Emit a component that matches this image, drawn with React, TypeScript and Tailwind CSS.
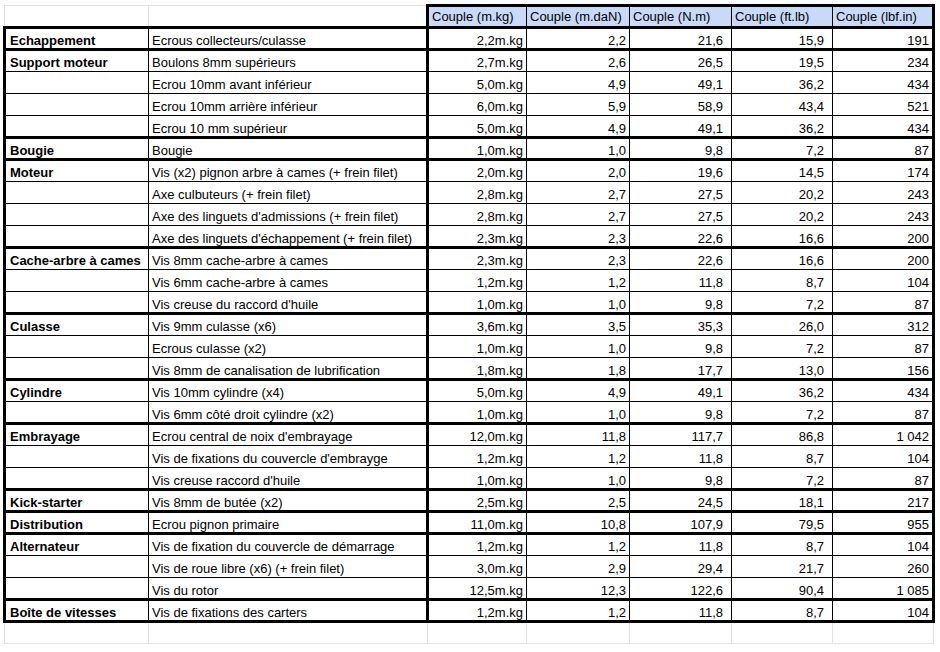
import React from "react";

type Row = [string, string, string, string, string, string];
type Group = { name: string; rows: Row[] };

const groups: Group[] = [
  { name: "Echappement", rows: [["Ecrous collecteurs/culasse", "2,2m.kg", "2,2", "21,6", "15,9", "191"]] },
  {
    name: "Support moteur",
    rows: [
      ["Boulons 8mm supérieurs", "2,7m.kg", "2,6", "26,5", "19,5", "234"],
      ["Ecrou 10mm avant inférieur", "5,0m.kg", "4,9", "49,1", "36,2", "434"],
      ["Ecrou 10mm arrière inférieur", "6,0m.kg", "5,9", "58,9", "43,4", "521"],
      ["Ecrou 10 mm supérieur", "5,0m.kg", "4,9", "49,1", "36,2", "434"],
    ],
  },
  { name: "Bougie", rows: [["Bougie", "1,0m.kg", "1,0", "9,8", "7,2", "87"]] },
  {
    name: "Moteur",
    rows: [
      ["Vis (x2) pignon arbre à cames (+ frein filet)", "2,0m.kg", "2,0", "19,6", "14,5", "174"],
      ["Axe culbuteurs (+ frein filet)", "2,8m.kg", "2,7", "27,5", "20,2", "243"],
      ["Axe des linguets d'admissions (+ frein filet)", "2,8m.kg", "2,7", "27,5", "20,2", "243"],
      ["Axe des linguets d'échappement (+ frein filet)", "2,3m.kg", "2,3", "22,6", "16,6", "200"],
    ],
  },
  {
    name: "Cache-arbre à cames",
    rows: [
      ["Vis 8mm cache-arbre à cames", "2,3m.kg", "2,3", "22,6", "16,6", "200"],
      ["Vis 6mm cache-arbre à cames", "1,2m.kg", "1,2", "11,8", "8,7", "104"],
      ["Vis creuse du raccord d'huile", "1,0m.kg", "1,0", "9,8", "7,2", "87"],
    ],
  },
  {
    name: "Culasse",
    rows: [
      ["Vis 9mm culasse (x6)", "3,6m.kg", "3,5", "35,3", "26,0", "312"],
      ["Ecrous culasse (x2)", "1,0m.kg", "1,0", "9,8", "7,2", "87"],
      ["Vis 8mm de canalisation de lubrification", "1,8m.kg", "1,8", "17,7", "13,0", "156"],
    ],
  },
  {
    name: "Cylindre",
    rows: [
      ["Vis 10mm cylindre (x4)", "5,0m.kg", "4,9", "49,1", "36,2", "434"],
      ["Vis 6mm côté droit cylindre (x2)", "1,0m.kg", "1,0", "9,8", "7,2", "87"],
    ],
  },
  {
    name: "Embrayage",
    rows: [
      ["Ecrou central de noix d'embrayage", "12,0m.kg", "11,8", "117,7", "86,8", "1 042"],
      ["Vis de fixations du couvercle d'embrayge", "1,2m.kg", "1,2", "11,8", "8,7", "104"],
      ["Vis creuse raccord d'huile", "1,0m.kg", "1,0", "9,8", "7,2", "87"],
    ],
  },
  { name: "Kick-starter", rows: [["Vis 8mm de butée (x2)", "2,5m.kg", "2,5", "24,5", "18,1", "217"]] },
  { name: "Distribution", rows: [["Ecrou pignon primaire", "11,0m.kg", "10,8", "107,9", "79,5", "955"]] },
  {
    name: "Alternateur",
    rows: [
      ["Vis de fixation du couvercle de démarrage", "1,2m.kg", "1,2", "11,8", "8,7", "104"],
      ["Vis de roue libre (x6) (+ frein filet)", "3,0m.kg", "2,9", "29,4", "21,7", "260"],
      ["Vis du rotor", "12,5m.kg", "12,3", "122,6", "90,4", "1 085"],
    ],
  },
  { name: "Boîte de vitesses", rows: [["Vis de fixations des carters", "1,2m.kg", "1,2", "11,8", "8,7", "104"]] },
];

const headers = ["Couple (m.kg)", "Couple (m.daN)", "Couple (N.m)", "Couple (ft.lb)", "Couple (lbf.in)"];

// Row content height so that every grid line is 22px apart, whatever the border widths.
function heightClass(t: number, b: number) {
  const sum = t + b;
  if (sum === 2) return "h-[21px]";
  if (sum === 4) return "h-[20px]";
  return "h-[19px]";
}

function Cell({
  children,
  t,
  b,
  align = "left",
  bold,
  pad = "px-[3px]",
}: {
  children?: React.ReactNode;
  t: number;
  b: number;
  align?: "left" | "right";
  bold?: boolean;
  pad?: string;
}) {
  const pt = t === 3 ? "pt-[4px]" : "pt-[5px]";
  return (
    <div
      className={`${heightClass(t, b)} ${pt} ${pad} whitespace-nowrap leading-[15px] ${align === "right" ? "text-right" : "text-left"} ${bold ? "font-bold" : ""}`}
    >
      {children}
    </div>
  );
}

const numPad = ["pl-[3px] pr-[3px]", "pl-[3px] pr-[3px]", "pl-[3px] pr-[8px]", "pl-[3px] pr-[8px]", "pl-[3px] pr-[3px]"];

export default function App() {
  return (
    <div className="min-h-[652px] w-[940px] bg-white pl-[3px] pt-[4px] text-[13px] text-black [font-family:'Liberation_Sans',Arial,sans-serif]">
      <table className="table-fixed border-collapse">
        <colgroup>
          <col className="w-[144px]" />
          <col className="w-[279px]" />
          <col className="w-[99px]" />
          <col className="w-[103px]" />
          <col className="w-[102px]" />
          <col className="w-[101px]" />
          <col className="w-[101px]" />
        </colgroup>
        <tbody>
          <tr>
            <td className="border border-[#e2e2e2] p-0">
              <div className="h-[19px]" />
            </td>
            <td className="border border-[#e2e2e2] p-0">
              <div className="h-[19px]" />
            </td>
            {headers.map((h, i) => (
              <td
                key={h}
                className={`border border-b-[3px] border-t-[3px] border-black bg-[#c9daf8] p-0 ${i === 0 ? "border-l-[3px]" : ""} ${i === 4 ? "border-r-[3px]" : ""}`}
              >
                <div className="h-[19px] whitespace-nowrap px-[3px] pt-[2px] leading-[15px]">{h}</div>
              </td>
            ))}
          </tr>
          {groups.map((g) =>
            g.rows.map((r, ri) => {
              const first = ri === 0;
              const last = ri === g.rows.length - 1;
              const t = first ? 3 : 1;
              const b = last ? 3 : 1;
              const tb = `${first ? "border-t-[3px]" : ""} ${last ? "border-b-[3px]" : ""}`;
              return (
                <tr key={g.name + ri}>
                  <td className={`border border-l-[3px] border-black p-0 ${tb}`}>
                    <Cell t={t} b={b} bold pad="pl-[4px] pr-[2px]">
                      {first ? g.name : ""}
                    </Cell>
                  </td>
                  <td className={`border border-r-[3px] border-black p-0 ${tb}`}>
                    <Cell t={t} b={b}>
                      {r[0]}
                    </Cell>
                  </td>
                  {r.slice(1).map((v, ci) => (
                    <td key={ci} className={`border border-black p-0 ${tb} ${ci === 4 ? "border-r-[3px]" : ""}`}>
                      <Cell t={t} b={b} align="right" pad={numPad[ci]}>
                        {v}
                      </Cell>
                    </td>
                  ))}
                </tr>
              );
            })
          )}
          <tr>
            {[0, 1, 2, 3, 4, 5, 6].map((i) => (
              <td key={i} className="border border-[#e2e2e2] p-0">
                <div className="h-[20px]" />
              </td>
            ))}
          </tr>
        </tbody>
      </table>
    </div>
  );
}
